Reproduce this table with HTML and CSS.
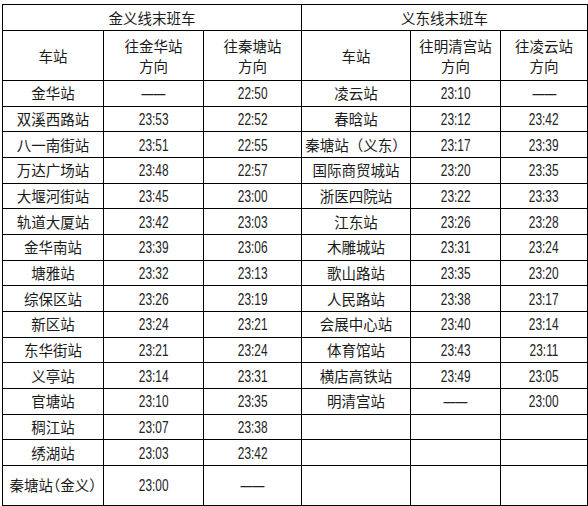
FILE: index.html
```html
<!DOCTYPE html>
<html lang="zh-CN">
<head>
<meta charset="utf-8">
<title>末班车时刻表</title>
<link rel="stylesheet" href="styles.css">
</head>
<body>
<div class="page">
<table class="tt">
<colgroup>
<col class="c1"><col class="c2"><col class="c3"><col class="c4"><col class="c5"><col class="c6">
</colgroup>
<tr class="title"><th colspan="3">金义线末班车</th><th colspan="3">义东线末班车</th></tr>
<tr class="head"><th>车站</th><th>往金华站<br>方向</th><th>往秦塘站<br>方向</th><th>车站</th><th>往明清宫站<br>方向</th><th>往凌云站<br>方向</th></tr>
<tr><td>金华站</td><td><span class="n">——</span></td><td><span class="n">22:50</span></td><td>凌云站</td><td><span class="n">23:10</span></td><td><span class="n">——</span></td></tr>
<tr><td>双溪西路站</td><td><span class="n">23:53</span></td><td><span class="n">22:52</span></td><td>春晗站</td><td><span class="n">23:12</span></td><td><span class="n">23:42</span></td></tr>
<tr><td>八一南街站</td><td><span class="n">23:51</span></td><td><span class="n">22:55</span></td><td>秦塘站（义东）</td><td><span class="n">23:17</span></td><td><span class="n">23:39</span></td></tr>
<tr><td>万达广场站</td><td><span class="n">23:48</span></td><td><span class="n">22:57</span></td><td>国际商贸城站</td><td><span class="n">23:20</span></td><td><span class="n">23:35</span></td></tr>
<tr><td>大堰河街站</td><td><span class="n">23:45</span></td><td><span class="n">23:00</span></td><td>浙医四院站</td><td><span class="n">23:22</span></td><td><span class="n">23:33</span></td></tr>
<tr><td>轨道大厦站</td><td><span class="n">23:42</span></td><td><span class="n">23:03</span></td><td>江东站</td><td><span class="n">23:26</span></td><td><span class="n">23:28</span></td></tr>
<tr><td>金华南站</td><td><span class="n">23:39</span></td><td><span class="n">23:06</span></td><td>木雕城站</td><td><span class="n">23:31</span></td><td><span class="n">23:24</span></td></tr>
<tr><td>塘雅站</td><td><span class="n">23:32</span></td><td><span class="n">23:13</span></td><td>歌山路站</td><td><span class="n">23:35</span></td><td><span class="n">23:20</span></td></tr>
<tr><td>综保区站</td><td><span class="n">23:26</span></td><td><span class="n">23:19</span></td><td>人民路站</td><td><span class="n">23:38</span></td><td><span class="n">23:17</span></td></tr>
<tr><td>新区站</td><td><span class="n">23:24</span></td><td><span class="n">23:21</span></td><td>会展中心站</td><td><span class="n">23:40</span></td><td><span class="n">23:14</span></td></tr>
<tr><td>东华街站</td><td><span class="n">23:21</span></td><td><span class="n">23:24</span></td><td>体育馆站</td><td><span class="n">23:43</span></td><td><span class="n">23:11</span></td></tr>
<tr><td>义亭站</td><td><span class="n">23:14</span></td><td><span class="n">23:31</span></td><td>横店高铁站</td><td><span class="n">23:49</span></td><td><span class="n">23:05</span></td></tr>
<tr><td>官塘站</td><td><span class="n">23:10</span></td><td><span class="n">23:35</span></td><td>明清宫站</td><td><span class="n">——</span></td><td><span class="n">23:00</span></td></tr>
<tr><td>稠江站</td><td><span class="n">23:07</span></td><td><span class="n">23:38</span></td><td></td><td></td><td></td></tr>
<tr><td>绣湖站</td><td><span class="n">23:03</span></td><td><span class="n">23:42</span></td><td></td><td></td><td></td></tr>
<tr class="last"><td class="halt">秦塘站（金义）</td><td><span class="n">23:00</span></td><td><span class="n">——</span></td><td></td><td></td><td></td></tr>
</table>
</div>
</body>
</html>
```

FILE: styles.css
```css
html, body {
  margin: 0;
  padding: 0;
  background: #ffffff;
}

.page {
  padding: 4px 0 0 2px;
}

.tt {
  border-collapse: collapse;
  table-layout: fixed;
  width: 585px;
  font-family: "Noto Sans CJK SC", "Noto Sans", sans-serif;
  font-size: 14.5px;
  color: #1a1a1a;
}

.c1 { width: 101px; }
.c2 { width: 100px; }
.c3 { width: 98px; }
.c4 { width: 109px; }
.c5 { width: 90px; }
.c6 { width: 87px; }

.tt th,
.tt td {
  border: 1px solid #000;
  padding: 0;
  text-align: center;
  vertical-align: middle;
  font-weight: normal;
  white-space: nowrap;
  line-height: 20px;
}

.tt tr {
  height: 25.667px;
}

.tt tr.title {
  height: 26px;
}

.tt tr.head {
  height: 50px;
}

.tt tr.last {
  height: 40px;
}

.n {
  display: inline-block;
  font-family: "Liberation Sans", Arial, sans-serif;
  font-size: 16.5px;
  color: #222;
  transform: scaleX(0.72);
}

.tt .halt {
  font-feature-settings: "halt";
}
```
